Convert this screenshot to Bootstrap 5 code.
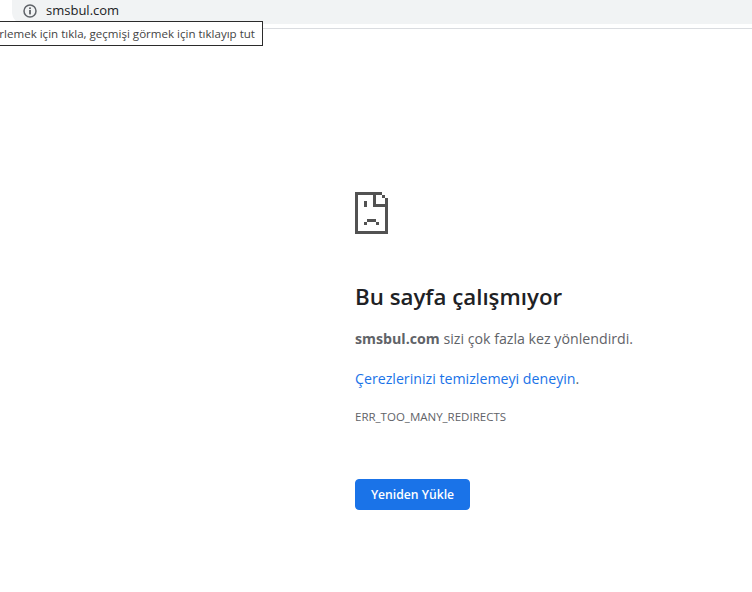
<!DOCTYPE html>
<html lang="tr">
<head>
<meta charset="utf-8">
<title>smsbul.com</title>
<link href="https://cdn.jsdelivr.net/npm/bootstrap@5.3.3/dist/css/bootstrap.min.css" rel="stylesheet">
<style>
  html, body { height: 100%; overflow: hidden; }
  body { font-family: "Open Sans", "Noto Sans", sans-serif; background: #fff; }
  .top-strip { height: 29px; border-bottom: 1px solid #dadce0; padding-left: 12px; }
  .addr-pill { height: 24px; background: #f1f3f4; border-radius: 0 0 0 12px; padding: 0 0 2px 11px; gap: 9px; font-size: 13px; color: #202124; }
  .addr-pill span { margin-top: -1px; }
  .hover-tip { position: absolute; right: calc(100% - 263px); top: 21px; height: 25px; line-height: 23px; background: #fff; border: 1px solid #2b2b2b; padding: 0 7px; font-size: 11.55px; color: #444; white-space: nowrap; }
  .err-wrap { padding: 163px 0 0 355px; width: 752px; }
  .err-wrap h1 { font-size: 22.3px; font-weight: 600; color: #202124; margin: 48px 0 0; line-height: 30px; }
  .err-text { font-size: 14.2px; color: #5f6368; line-height: 20px; margin: 17px 0 0; }
  .err-text + .err-text { margin-top: 20px; }
  .err-link { color: #1a73e8; text-decoration: none; }
  .err-code { font-size: 11.5px; color: #5f6368; line-height: 16px; margin: 20px 0 0; }
  .reload-btn { margin-top: 54px; width: 115px; height: 31px; padding: 1px 0 0; background: #1a73e8; border-color: #1a73e8; font-size: 12.2px; font-weight: 600; border-radius: 4px; }
</style>
</head>
<body class="position-relative">
  <div class="top-strip">
    <div class="addr-pill d-flex align-items-center">
      <svg width="14" height="14" viewBox="0 0 14 14" fill="none">
        <circle cx="7" cy="7" r="6" stroke="#5f6368" stroke-width="1.5"/>
        <rect x="6.1" y="6" width="1.8" height="4.4" fill="#5f6368"/>
        <rect x="6.1" y="3.4" width="1.8" height="1.7" fill="#5f6368"/>
      </svg>
      <span>smsbul.com</span>
    </div>
  </div>
  <div class="hover-tip">İlerlemek için tıkla, geçmişi görmek için tıklayıp tut</div>

  <div class="err-wrap">
    <svg class="d-block" width="33" height="42" viewBox="0 0 33 42" shape-rendering="crispEdges" fill="#525252">
      <rect x="0" y="0" width="27" height="3"/>
      <rect x="0" y="0" width="3" height="42"/>
      <rect x="0" y="39" width="33" height="3"/>
      <rect x="30" y="9" width="3" height="33"/>
      <rect x="27" y="3" width="3" height="3"/>
      <rect x="30" y="6" width="3" height="3"/>
      <rect x="18" y="3" width="3" height="12"/>
      <rect x="18" y="12" width="15" height="3"/>
      <rect x="9" y="9" width="3" height="6"/>
      <rect x="12" y="27" width="9" height="3"/>
      <rect x="9" y="30" width="3" height="3"/>
      <rect x="21" y="30" width="3" height="3"/>
    </svg>
    <h1>Bu sayfa çalışmıyor</h1>
    <p class="err-text"><strong>smsbul.com</strong> sizi çok fazla kez yönlendirdi.</p>
    <p class="err-text"><a class="err-link" href="#">Çerezlerinizi temizlemeyi deneyin</a>.</p>
    <div class="err-code">ERR_TOO_MANY_REDIRECTS</div>
    <button type="button" class="btn btn-primary reload-btn d-block">Yeniden Yükle</button>
  </div>
  <script src="https://cdn.jsdelivr.net/npm/bootstrap@5.3.3/dist/js/bootstrap.bundle.min.js"></script>
</body>
</html>
